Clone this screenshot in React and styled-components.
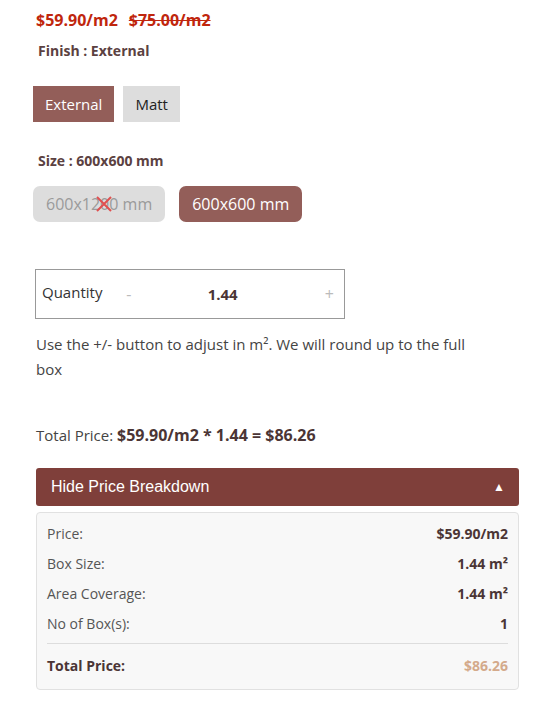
import styled, { createGlobalStyle } from 'styled-components';

const Global = createGlobalStyle`
	body {
		margin: 0;
		background: #fff;
		font-family: 'Open Sans', 'Noto Sans', sans-serif;
	}
`;

const Page = styled.div`
	width: 483px;
	padding: 10px 33px 0 36px;
`;

const PriceLine = styled.div`
	display: flex;
	gap: 11px;
	font-size: 16px;
	font-weight: 700;
	color: #c0260d;
	line-height: 20px;
`;

const OldPrice = styled.span`
	text-decoration: line-through;
`;

const Label = styled.div`
	margin: ${(props) => props.$margin || '0'};
	padding-left: 2px;
	font-size: 14px;
	font-weight: 700;
	color: #5b4141;
	line-height: 20px;
`;

const Options = styled.div`
	display: flex;
	gap: ${(props) => props.$gap || '9px'};
	margin-left: -3px;
	margin-top: ${(props) => props.$top};
`;

const Option = styled.div`
	position: relative;
	height: 36px;
	padding: 0 ${(props) => (props.$round ? '13px' : '12px')};
	display: flex;
	align-items: center;
	font-size: ${(props) => (props.$round ? '16px' : '15px')};
	border-radius: ${(props) => (props.$round ? '7px' : '0')};
	background: ${(props) => (props.$active ? '#935e59' : '#dddddd')};
	color: ${(props) => (props.$active ? '#fff' : props.$disabled ? '#9a9a9a' : '#222')};
`;

const Cross = styled.svg`
	position: absolute;
	left: 62px;
	top: 9px;
`;

const QtyBox = styled.div`
	margin-top: 47px;
	margin-left: -1px;
	width: 310px;
	height: 50px;
	box-sizing: border-box;
	border: 1px solid #999;
	display: flex;
	align-items: center;
	padding: 0 10px 0 6px;
	font-size: 15px;
	color: #333;
`;

const QtyLabel = styled.span`
	margin-top: -4px;
`;

const Step = styled.span`
	color: #bbb;
	font-size: 16px;
	width: ${(props) => props.$w};
	text-align: ${(props) => props.$align || 'left'};
`;

const QtyValue = styled.span`
	flex: 1;
	text-align: center;
	font-weight: 700;
	color: #4b3535;
	font-size: 15px;
`;

const Help = styled.p`
	margin: 13px 0 0;
	font-size: 15px;
	line-height: 25px;
	color: #444;
	width: 445px;
`;

const Total = styled.div`
	margin-top: 42px;
	font-size: 15px;
	color: #444;
	line-height: 22px;

	b {
		font-size: 16px;
		color: #4b3535;
	}
`;

const Bar = styled.div`
	margin-top: 22px;
	height: 38px;
	background: #7f3f3a;
	border-radius: 3px;
	display: flex;
	align-items: center;
	justify-content: space-between;
	padding: 0 15px;
	color: #fff;
	font-family: 'Liberation Sans', Arial, sans-serif;
	font-size: 16px;
`;

const Arrow = styled.span`
	font-size: 12px;
	margin-right: -1px;
`;

const Breakdown = styled.div`
	margin-top: 6px;
	background: #f8f8f8;
	border: 1px solid #e1e1e1;
	border-radius: 4px;
	padding: 5px 10px 9px;
`;

const Row = styled.div`
	display: flex;
	justify-content: space-between;
	align-items: center;
	height: 30px;
	font-size: 14px;
	color: #555;
`;

const Value = styled.span`
	font-weight: 700;
	color: ${(props) => props.$color || '#4b3535'};
`;

const Divider = styled.div`
	height: 1px;
	background: #ddd;
	margin: 5px 0 6px;
`;

const TotalLabel = styled.span`
	font-weight: 700;
	color: #4b3535;
`;

const rows = [
	['Price:', '$59.90/m2'],
	['Box Size:', '1.44 m²'],
	['Area Coverage:', '1.44 m²'],
	['No of Box(s):', '1'],
];

export default function App() {
	return (
		<Page>
			<Global />
			<PriceLine>
				<span>$59.90/m2</span>
				<OldPrice>$75.00/m2</OldPrice>
			</PriceLine>
			<Label $margin="11px 0 0">Finish : External</Label>
			<Options $top="25px">
				<Option $active>External</Option>
				<Option>Matt</Option>
			</Options>
			<Label $margin="29px 0 0">Size : 600x600 mm</Label>
			<Options $gap="14px" $top="15px">
				<Option $round $disabled>
					600x1200 mm
					<Cross width="18" height="18" viewBox="0 0 18 18">
						<path d="M2 2 L16 16 M16 2 L2 16" stroke="#e05050" strokeWidth="2" />
					</Cross>
				</Option>
				<Option $round $active>600x600 mm</Option>
			</Options>
			<QtyBox>
				<QtyLabel>Quantity</QtyLabel>
				<Step $w="29px" $align="right">-</Step>
				<QtyValue>1.44</QtyValue>
				<Step $w="20px" $align="right">+</Step>
			</QtyBox>
			<Help>Use the +/- button to adjust in m². We will round up to the full box</Help>
			<Total>
				Total Price: <b>$59.90/m2 * 1.44 = $86.26</b>
			</Total>
			<Bar>
				<span>Hide Price Breakdown</span>
				<Arrow>▲</Arrow>
			</Bar>
			<Breakdown>
				{rows.map(([k, v]) => (
					<Row key={k}>
						<span>{k}</span>
						<Value>{v}</Value>
					</Row>
				))}
				<Divider />
				<Row>
					<TotalLabel>Total Price:</TotalLabel>
					<Value $color="#d4aa8b">$86.26</Value>
				</Row>
			</Breakdown>
		</Page>
	);
}
